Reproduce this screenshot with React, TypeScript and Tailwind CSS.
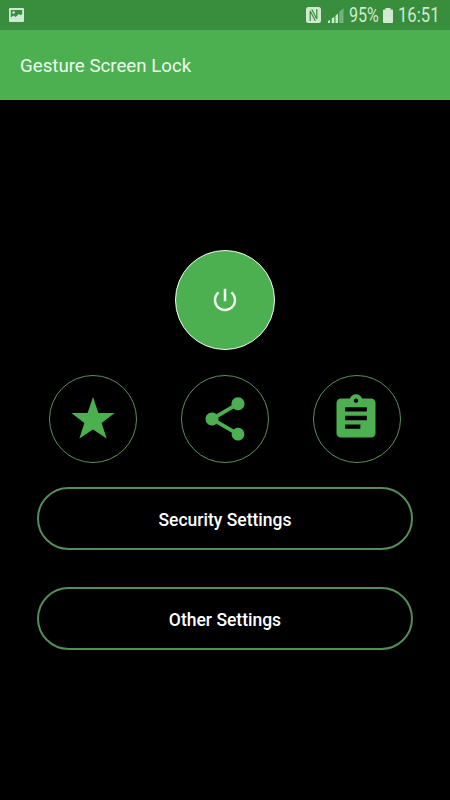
import type { ReactNode } from 'react';

const ICONS = {
  power:
    'M13 3h-2v10h2V3zm4.83 2.17l-1.42 1.42C17.99 7.86 19 9.81 19 12c0 3.87-3.13 7-7 7s-7-3.13-7-7c0-2.19 1.01-4.14 2.58-5.42L6.17 5.17C4.23 6.82 3 9.26 3 12c0 4.97 4.03 9 9 9s9-4.03 9-9c0-2.74-1.23-5.18-3.17-6.83z',
  star: 'M12 1.8L14.5 9.2H22L16 13.8L18.3 21L12 16.9L5.7 21L8 13.8L2 9.2H9.5z',
  share:
    'M18 16.08c-.76 0-1.44.3-1.96.77L8.91 12.7c.05-.23.09-.46.09-.7s-.04-.47-.09-.7l7.05-4.11c.54.5 1.25.81 2.04.81 1.66 0 3-1.34 3-3s-1.34-3-3-3-3 1.34-3 3c0 .24.04.47.09.7L8.04 9.81C7.5 9.31 6.79 9 6 9c-1.66 0-3 1.34-3 3s1.34 3 3 3c.79 0 1.5-.31 2.04-.81l7.12 4.16c-.05.21-.08.43-.08.65 0 1.61 1.31 2.92 2.92 2.92s2.92-1.31 2.92-2.92-1.31-2.92-2.92-2.92z',
  clipboard:
    'M19 3h-4.18C14.4 1.84 13.3 1 12 1c-1.3 0-2.4.84-2.82 2H5c-1.1 0-2 .9-2 2v14c0 1.1.9 2 2 2h14c1.1 0 2-.9 2-2V5c0-1.1-.9-2-2-2zm-7 0c.55 0 1 .45 1 1s-.45 1-1 1-1-.45-1-1 .45-1 1-1zm2 14H7v-2h7v2zm3-4H7v-2h10v2zm0-4H7V7h10v2z',
};

interface IconProps {
  path: string;
  className: string;
}

function Icon({ path, className }: IconProps) {
  return (
    <svg viewBox="0 0 24 24" fill="currentColor" className={className}>
      <path d={path} />
    </svg>
  );
}

function StatusBar() {
  return (
    <div className="flex h-[30px] items-center bg-[#388e3c] pl-[9px] pr-[10px] text-[#d0ead1]">
      {/* Screenshot notification */}
      <svg viewBox="0 0 15 14" className="h-[14px] w-[15px]" fill="currentColor">
        <path
          fillRule="evenodd"
          d="M1 0h13a1 1 0 0 1 1 1v12a1 1 0 0 1-1 1H1a1 1 0 0 1-1-1V1a1 1 0 0 1 1-1zM1.8 2v7.5l2.7-2 2 1.4L10 6l1.4 1.2L13.2 6V2z"
        />
        <circle cx="4.6" cy="4.5" r="1.3" />
      </svg>

      {/* NFC */}
      <svg viewBox="0 0 15 16" className="ml-auto h-4 w-[15px]">
        <rect width="15" height="16" rx="2.5" fill="currentColor" />
        <path
          d="M4.2 14V4L9.3 13.8M10.8 2v10L5.7 2.2"
          fill="none"
          stroke="#388e3c"
          strokeWidth="1.2"
        />
      </svg>

      {/* Signal */}
      <svg viewBox="0 0 16 15" className="ml-[7px] h-[15px] w-4" fill="currentColor">
        <path d="M0 15v-2l2-1v3zM3.7 15v-4.5l2.6-1.8V15zM7.5 15V7.7L10 5.5V15z" />
        <path d="M11.2 15V4L15.5 0v15z" opacity=".4" />
      </svg>

      <div className="ml-[5px] w-[31px] pt-[2px]">
        <span className="inline-block origin-left scale-x-[0.83] font-[Roboto] text-[19.4px] leading-[32px]">95%</span>
      </div>

      {/* Battery */}
      <svg viewBox="0 0 10 15" className="ml-[3px] h-[15px] w-[10px]" fill="currentColor">
        <path d="M2.5 0h5v1.5H9a1 1 0 0 1 1 1V14a1 1 0 0 1-1 1H1a1 1 0 0 1-1-1V2.5a1 1 0 0 1 1-1h1.5z" />
      </svg>

      <div className="ml-[5px] w-[42px] pt-[2px]">
        <span className="inline-block origin-left scale-x-[0.86] font-[Roboto] text-[19.4px] leading-[32px]">16:51</span>
      </div>
    </div>
  );
}

function RoundButton({ children }: { children: ReactNode }) {
  return (
    <button className="flex size-[88px] items-center justify-center rounded-full border border-[#5c8f60] text-[#4caf50]">
      {children}
    </button>
  );
}

function SettingsButton({ label }: { label: string }) {
  return (
    <button className="h-[63px] w-[376px] rounded-full border-2 border-[#568c5a] pt-[3px] text-[17.5px] font-medium text-white">
      {label}
    </button>
  );
}

export default function App() {
  return (
    <div className="flex h-screen w-full flex-col overflow-hidden bg-black font-[Roboto,sans-serif]">
      <StatusBar />
      <header className="flex h-[70px] items-center bg-[#4caf50] pt-[2px] pl-5">
        <h1 className="text-[18.7px] text-[#f0faf0]">Gesture Screen Lock</h1>
      </header>

      <main className="flex flex-1 flex-col items-center pt-[150px]">
        <button className="flex size-[100px] items-center justify-center rounded-full border border-[#f0faf0] bg-[#4caf50] text-[#f0faf0]">
          <Icon path={ICONS.power} className="size-[30px]" />
        </button>

        <div className="mt-[25px] flex gap-11">
          <RoundButton>
            <Icon path={ICONS.star} className="size-[52px]" />
          </RoundButton>
          <RoundButton>
            <Icon path={ICONS.share} className="size-[52px]" />
          </RoundButton>
          <RoundButton>
            <Icon path={ICONS.clipboard} className="mr-0.5 mb-0.5 size-[52px]" />
          </RoundButton>
        </div>

        <div className="mt-6 flex flex-col gap-[37px]">
          <SettingsButton label="Security Settings" />
          <SettingsButton label="Other Settings" />
        </div>
      </main>
    </div>
  );
}
